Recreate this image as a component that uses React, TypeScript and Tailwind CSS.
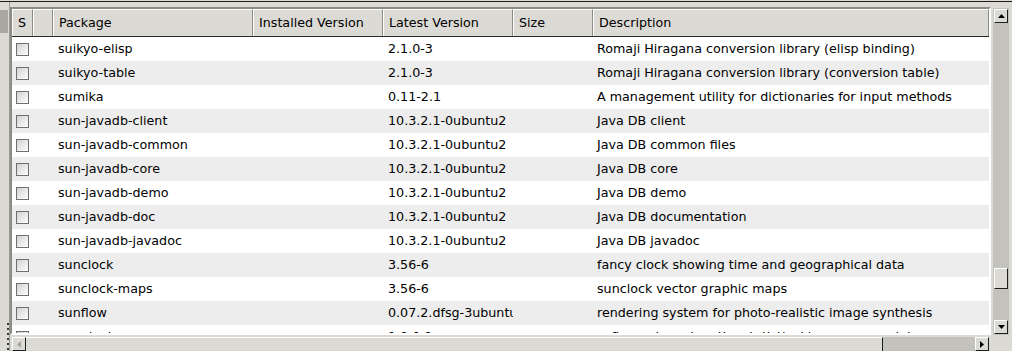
import React from 'react';

type Pkg = {
  name: string;
  installed: string;
  latest: string;
  size: string;
  desc: string;
};

const packages: Pkg[] = [
  { name: 'suikyo-elisp', installed: '', latest: '2.1.0-3', size: '', desc: 'Romaji Hiragana conversion library (elisp binding)' },
  { name: 'suikyo-table', installed: '', latest: '2.1.0-3', size: '', desc: 'Romaji Hiragana conversion library (conversion table)' },
  { name: 'sumika', installed: '', latest: '0.11-2.1', size: '', desc: 'A management utility for dictionaries for input methods' },
  { name: 'sun-javadb-client', installed: '', latest: '10.3.2.1-0ubuntu2', size: '', desc: 'Java DB client' },
  { name: 'sun-javadb-common', installed: '', latest: '10.3.2.1-0ubuntu2', size: '', desc: 'Java DB common files' },
  { name: 'sun-javadb-core', installed: '', latest: '10.3.2.1-0ubuntu2', size: '', desc: 'Java DB core' },
  { name: 'sun-javadb-demo', installed: '', latest: '10.3.2.1-0ubuntu2', size: '', desc: 'Java DB demo' },
  { name: 'sun-javadb-doc', installed: '', latest: '10.3.2.1-0ubuntu2', size: '', desc: 'Java DB documentation' },
  { name: 'sun-javadb-javadoc', installed: '', latest: '10.3.2.1-0ubuntu2', size: '', desc: 'Java DB javadoc' },
  { name: 'sunclock', installed: '', latest: '3.56-6', size: '', desc: 'fancy clock showing time and geographical data' },
  { name: 'sunclock-maps', installed: '', latest: '3.56-6', size: '', desc: 'sunclock vector graphic maps' },
  { name: 'sunflow', installed: '', latest: '0.07.2.dfsg-3ubuntu1', size: '', desc: 'rendering system for photo-realistic image synthesis' },
  { name: 'sunpinyin', installed: '', latest: '1.0.0-1', size: '', desc: 'software based on the statistical language model' },
];

// column widths incl. separators, 12px .. 989px
const cols = [
  { key: 's', label: 'S', w: 'w-[21px]' },
  { key: 'x', label: '', w: 'w-[20px]' },
  { key: 'name', label: 'Package', w: 'w-[200px]' },
  { key: 'installed', label: 'Installed Version', w: 'w-[130px]' },
  { key: 'latest', label: 'Latest Version', w: 'w-[130px]' },
  { key: 'size', label: 'Size', w: 'w-[80px]' },
  { key: 'desc', label: 'Description', w: 'w-[396px]' },
];

const Arrow = ({ dir, color = '#000' }: { dir: 'up' | 'down' | 'left' | 'right'; color?: string }) => {
  const pts = {
    up: '0,4 3.5,0 7,4',
    down: '0,0 7,0 3.5,4',
    left: '4,0 4,7 0,3.5',
    right: '0,0 0,7 4,3.5',
  }[dir];
  const vertical = dir === 'up' || dir === 'down';
  return (
    <svg width={vertical ? 7 : 4} height={vertical ? 4 : 7} viewBox={vertical ? '0 0 7 4' : '0 0 4 7'}>
      <polygon points={pts} fill={color} />
    </svg>
  );
};

const ScrollButton = ({ dir, disabled }: { dir: 'up' | 'down' | 'left' | 'right'; disabled?: boolean }) => (
  <div className="w-[14px] h-[14px] shrink-0 flex items-center justify-center bg-[#dcdad5] border border-t-white border-l-white border-r-[#1e1e1e] border-b-[#1e1e1e]">
    <Arrow dir={dir} color={disabled ? '#a5a39e' : '#000'} />
  </div>
);

const CheckBox = () => (
  <div className="w-[13px] h-[13px] border border-[#6f6f6f] bg-linear-to-br from-[#d2d2d2] to-white" />
);

export default function App() {
  return (
    <div className="w-[1012px] h-[351px] overflow-hidden bg-[#dcdad5] flex flex-col font-['DejaVu_Sans',sans-serif] text-[12.7px] text-black">
      <div className="h-px shrink-0" />
      <div className="h-px shrink-0 bg-[#1c1c1c]" />
      <div className="flex flex-1 min-h-0">
        {/* left pane edge */}
        <div className="w-[10px] shrink-0 flex flex-col border-r border-r-[#9c9a94]">
          <div className="mt-[8px] h-[23px] w-[8px] bg-[#a9a7a2]" />
          <div className="mt-auto mb-[1px] ml-[7px] flex flex-col gap-[3px]">
            {Array.from({ length: 6 }).map((_, i) => (
              <div key={i} className="w-[2px] h-[2px] bg-[#3a3a3a]" />
            ))}
          </div>
        </div>

        <div className="flex flex-col">
          <div className="flex mt-[5px]">
            {/* tree frame */}
            <div className="w-[981px] h-[328px] border-2 border-t-[#8d8b86] border-l-[#8d8b86] border-r-white border-b-white">
              <div className="h-full overflow-hidden bg-white">
                {/* header */}
                <div className="flex h-[28px] bg-[#dcdad5] border-b border-b-[#2a2a2a]">
                  {cols.map((c) => (
                    <div
                      key={c.key}
                      className={`${c.w} shrink-0 flex items-center pl-[5px] border-l border-l-white border-r border-r-[#8d8b86] border-t border-t-white whitespace-nowrap overflow-hidden`}
                    >
                      {c.label}
                    </div>
                  ))}
                </div>
                {/* rows */}
                {packages.map((p, i) => (
                  <div key={p.name} className={`flex h-[24px] items-center ${i % 2 === 1 ? 'bg-[#ededed]' : 'bg-white'}`}>
                    <div className="w-[21px] shrink-0 pl-[4px] flex items-center">
                      <CheckBox />
                    </div>
                    <div className="w-[20px] shrink-0" />
                    <div className="w-[200px] shrink-0 pl-[5px] whitespace-nowrap overflow-hidden">{p.name}</div>
                    <div className="w-[130px] shrink-0 pl-[5px] whitespace-nowrap overflow-hidden">{p.installed}</div>
                    <div className="w-[130px] shrink-0 pl-[5px] pr-px whitespace-nowrap overflow-hidden">{p.latest}</div>
                    <div className="w-[80px] shrink-0 pl-[5px] whitespace-nowrap overflow-hidden">{p.size}</div>
                    <div className="w-[396px] shrink-0 pl-[4px] whitespace-nowrap overflow-hidden">{p.desc}</div>
                  </div>
                ))}
              </div>
            </div>

            {/* vertical scrollbar */}
            <div className="ml-[2px] mt-px w-[16px] h-[327px] bg-[#c4c2bd] flex flex-col items-center pt-px">
              <ScrollButton dir="up" />
              <div className="flex-1 w-[14px]">
                <div className="mt-[245px] h-[21px] w-[14px] bg-[#dcdad5] border border-t-white border-l-white border-r-[#1e1e1e] border-b-[#1e1e1e]" />
              </div>
              <div className="mb-[1px]">
                <ScrollButton dir="down" />
              </div>
            </div>
          </div>

          {/* horizontal scrollbar */}
          <div className="mt-[2px] ml-[2px] w-[977px] h-[14px] bg-[#c4c2bd] flex">
            <ScrollButton dir="left" disabled />
            <div className="w-[857px] h-[14px] bg-[#dcdad5] border-t border-t-white border-r border-r-[#1e1e1e]" />
            <div className="flex-1" />
            <ScrollButton dir="right" />
          </div>
        </div>
      </div>
    </div>
  );
}
